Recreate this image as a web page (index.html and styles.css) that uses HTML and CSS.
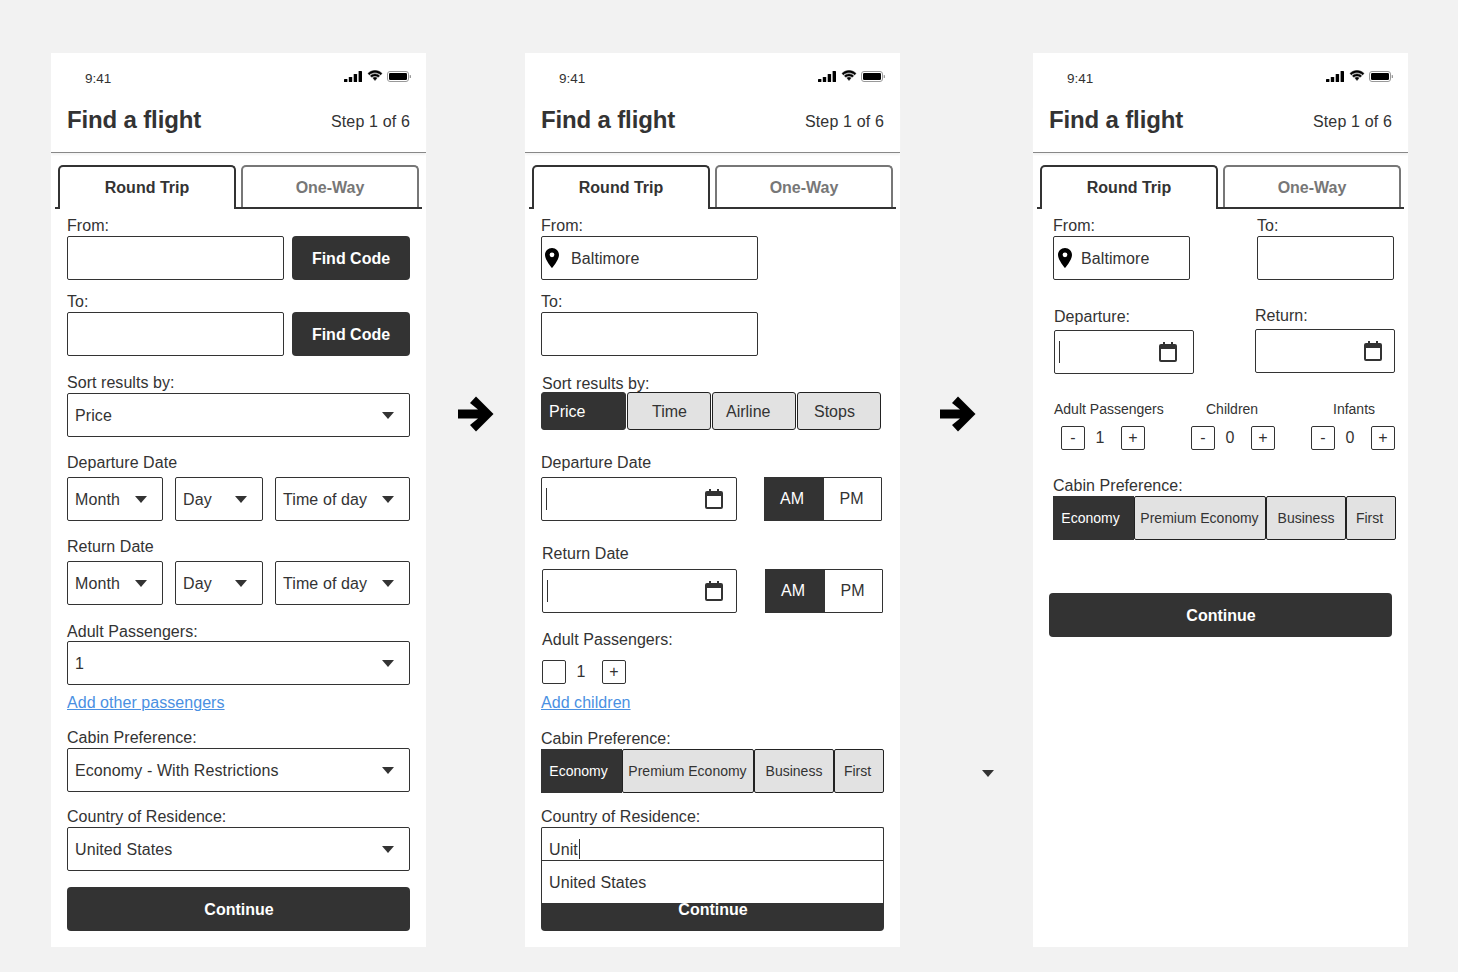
FILE: index.html
```html
<!DOCTYPE html>
<html lang="en">

<head>
    <meta charset="UTF-8">
    <meta name="viewport" content="width=device-width, initial-scale=1.0">
    <title>Find a flight</title>
    <link rel="stylesheet" href="styles.css">
</head>

<body>
    <svg class="sprites" width="0" height="0">
        <symbol id="signal" viewBox="0 0 18 11">
            <rect x="0" y="8" width="3.400" height="3" rx=".6" />
            <rect x="4.800" y="6" width="3.400" height="5" rx=".6" />
            <rect x="9.700" y="3" width="3.400" height="8" rx=".6" />
            <rect x="14.600" y="0" width="3.400" height="11" rx=".6" />
        </symbol>
        <symbol id="wifi" viewBox="0 0 16 11">
            <g stroke="#000" stroke-width=".5">
                <path d="M8 2.600c2.200 0 4.200.9 5.600 2.300l1.400-1.500C13.200 1.600 10.700.5 8 .5S2.800 1.600 1 3.400l1.400 1.500C3.800 3.500 5.800 2.600 8 2.600z" />
                <path d="M8 6c1.300 0 2.400.5 3.200 1.300l1.400-1.500C11.400 4.600 9.800 3.900 8 3.900s-3.400.7-4.600 1.900l1.400 1.500C5.600 6.500 6.700 6 8 6z" />
                <path d="M8 7.300c-.8 0-1.500.3-2 .8l2 2.400 2-2.400c-.5-.5-1.200-.8-2-.8z" />
            </g>
        </symbol>
        <symbol id="battery" viewBox="0 0 24 11">
            <rect x=".5" y=".5" width="21" height="10" rx="2.500" fill="none" stroke="#999" />
            <rect x="2" y="2" width="18" height="7" rx="1.200" />
            <rect x="22.700" y="4" width="1.300" height="3" rx=".6" fill="#999" />
        </symbol>
        <symbol id="pin" viewBox="0 0 14 20">
            <path fill-rule="evenodd" d="M7 0C3.100 0 0 3.100 0 7c0 5 7 13 7 13s7-8 7-13c0-3.900-3.100-7-7-7zm0 9.200A2.400 2.400 0 1 1 7 4.400a2.400 2.400 0 0 1 0 4.800z" />
        </symbol>
        <symbol id="calendar" viewBox="0 0 18 20">
            <path fill-rule="evenodd" d="M4 0h2v2h6V0h2v2h2a2 2 0 0 1 2 2v14a2 2 0 0 1-2 2H2a2 2 0 0 1-2-2V4a2 2 0 0 1 2-2h2V0zM2 7v11h14V7H2z" />
        </symbol>
        <symbol id="arrow" viewBox="0 0 36 36">
            <path d="M0 13.500H20L12 7 18 .5 35.500 18 18 35.500 12 29 20 22.500H0Z" />
        </symbol>
    </svg>

    <div class="board">

        <!-- first screen -->
        <section class="phone">
            <div class="status">
                <span class="time">9:41</span>
                <span class="status-icons">
                    <svg class="i-signal"><use href="#signal" /></svg>
                    <svg class="i-wifi"><use href="#wifi" /></svg>
                    <svg class="i-battery"><use href="#battery" /></svg>
                </span>
            </div>
            <div class="header">
                <h1>Find a flight</h1>
                <span class="step">Step 1 of 6</span>
            </div>
            <div class="tabs">
                <div class="tab active">Round Trip</div>
                <div class="tab">One-Way</div>
            </div>
            <div class="form">
                <label class="lb lh-18 mt-8">From:</label>
                <div class="row">
                    <div class="box w-217"></div>
                    <button class="find">Find Code</button>
                </div>
                <label class="lb lh-18 mt-13">To:</label>
                <div class="row">
                    <div class="box w-217"></div>
                    <button class="find">Find Code</button>
                </div>
                <label class="lb lh-18 mt-18">Sort results by:</label>
                <div class="box select">Price<i class="caret"></i></div>
                <label class="lb mt-16 lb-gap">Departure Date</label>
                <div class="row-date">
                    <div class="box select w-96">Month<i class="caret"></i></div>
                    <div class="box select w-88">Day<i class="caret"></i></div>
                    <div class="box select w-135">Time of day<i class="caret"></i></div>
                </div>
                <label class="lb mt-16 lb-gap">Return Date</label>
                <div class="row-date">
                    <div class="box select w-96">Month<i class="caret"></i></div>
                    <div class="box select w-88">Day<i class="caret"></i></div>
                    <div class="box select w-135">Time of day<i class="caret"></i></div>
                </div>
                <label class="lb mt-17">Adult Passengers:</label>
                <div class="box select">1<i class="caret"></i></div>
                <a class="lb link mt-8" href="#">Add other passengers</a>
                <label class="lb mt-17 lb-2">Cabin Preference:</label>
                <div class="box select">Economy - With Restrictions<i class="caret"></i></div>
                <label class="lb mt-15 lb-2">Country of Residence:</label>
                <div class="box select">United States<i class="caret"></i></div>
                <button class="continue mt-16">Continue</button>
            </div>
        </section>

        <div class="gap gap-a">
            <svg class="big-arrow"><use href="#arrow" /></svg>
        </div>

        <!-- second screen -->
        <section class="phone">
            <div class="status">
                <span class="time">9:41</span>
                <span class="status-icons">
                    <svg class="i-signal"><use href="#signal" /></svg>
                    <svg class="i-wifi"><use href="#wifi" /></svg>
                    <svg class="i-battery"><use href="#battery" /></svg>
                </span>
            </div>
            <div class="header">
                <h1>Find a flight</h1>
                <span class="step">Step 1 of 6</span>
            </div>
            <div class="tabs">
                <div class="tab active">Round Trip</div>
                <div class="tab">One-Way</div>
            </div>
            <div class="form">
                <label class="lb lh-18 mt-8">From:</label>
                <div class="box w-217 place">
                    <svg class="i-pin"><use href="#pin" /></svg>
                    Baltimore
                </div>
                <label class="lb lh-18 mt-13">To:</label>
                <div class="box w-217"></div>
                <label class="lb lh-18 mt-19 in-1 lb-up">Sort results by:</label>
                <div class="seg sort">
                    <div class="on">Price</div>
                    <div>Time</div>
                    <div>Airline</div>
                    <div>Stops</div>
                </div>
                <label class="lb mt-23 lb-gap">Departure Date</label>
                <div class="row-ampm">
                    <div class="box date w-196">
                        <i class="cursor"></i>
                        <svg class="i-cal"><use href="#calendar" /></svg>
                    </div>
                    <div class="ampm"><span class="on">AM</span><span>PM</span></div>
                </div>
                <label class="lb mt-23 in-1 lb-7">Return Date</label>
                <div class="row-ampm in-1">
                    <div class="box date w-195">
                        <i class="cursor"></i>
                        <svg class="i-cal"><use href="#calendar" /></svg>
                    </div>
                    <div class="ampm"><span class="on">AM</span><span>PM</span></div>
                </div>
                <label class="lb mt-17 in-1">Adult Passengers:</label>
                <div class="stepper in-1 mt-12">
                    <span class="pm"></span><span class="num">1</span><span class="pm">+</span>
                </div>
                <a class="lb link mt-9" href="#">Add children</a>
                <label class="lb mt-18 lb-2">Cabin Preference:</label>
                <div class="seg cabin">
                    <div class="on">Economy</div>
                    <div>Premium Economy</div>
                    <div>Business</div>
                    <div>First</div>
                </div>
                <label class="lb mt-14 lb-2">Country of Residence:</label>
                <div class="combo-wrap">
                    <div class="box spacer"></div>
                    <button class="continue mt-16">Continue</button>
                    <div class="combo">
                        <div class="combo-input">Unit<i class="cursor-sm"></i></div>
                        <div class="combo-option">United States</div>
                    </div>
                </div>
            </div>
        </section>

        <div class="gap gap-b">
            <svg class="big-arrow"><use href="#arrow" /></svg>
            <i class="caret stray"></i>
        </div>

        <!-- third screen -->
        <section class="phone">
            <div class="status">
                <span class="time">9:41</span>
                <span class="status-icons">
                    <svg class="i-signal"><use href="#signal" /></svg>
                    <svg class="i-wifi"><use href="#wifi" /></svg>
                    <svg class="i-battery"><use href="#battery" /></svg>
                </span>
            </div>
            <div class="header">
                <h1>Find a flight</h1>
                <span class="step">Step 1 of 6</span>
            </div>
            <div class="tabs">
                <div class="tab active">Round Trip</div>
                <div class="tab">One-Way</div>
            </div>
            <div class="form form-wide">
                <div class="two mt-8">
                    <div>
                        <label class="lb lh-18">From:</label>
                        <div class="box w-137 place place-sm">
                            <svg class="i-pin"><use href="#pin" /></svg>
                            Baltimore
                        </div>
                    </div>
                    <div class="col-to">
                        <label class="lb lh-18">To:</label>
                        <div class="box w-137"></div>
                    </div>
                </div>
                <div class="two two-dates">
                    <div class="col-dep">
                        <label class="lb lb-5">Departure:</label>
                        <div class="box date w-140 cal-far">
                            <i class="cursor"></i>
                            <svg class="i-cal"><use href="#calendar" /></svg>
                        </div>
                    </div>
                    <div class="col-ret">
                        <label class="lb lb-5">Return:</label>
                        <div class="box date w-140 cal-near">
                            <svg class="i-cal"><use href="#calendar" /></svg>
                        </div>
                    </div>
                </div>
                <div class="pax-labels">
                    <span>Adult Passengers</span>
                    <span>Children</span>
                    <span>Infants</span>
                </div>
                <div class="pax-steppers">
                    <div class="stepper"><span class="pm">-</span><span class="num">1</span><span class="pm">+</span></div>
                    <div class="stepper"><span class="pm">-</span><span class="num">0</span><span class="pm">+</span></div>
                    <div class="stepper"><span class="pm">-</span><span class="num">0</span><span class="pm">+</span></div>
                </div>
                <label class="lb mt-26 lb-2">Cabin Preference:</label>
                <div class="seg cabin">
                    <div class="on">Economy</div>
                    <div>Premium Economy</div>
                    <div>Business</div>
                    <div>First</div>
                </div>
                <button class="continue continue-low">Continue</button>
            </div>
        </section>

    </div>
</body>

</html>
```

FILE: styles.css
```css
* {
    box-sizing: border-box;
}

body {
    margin: 0;
    background-color: #f2f2f2;
    color: #333;
    font-family: "Liberation Sans", Arial, sans-serif;
    font-size: 16px;
}

.sprites {
    display: block;
    height: 0;
}

.board {
    display: flex;
    align-items: flex-start;
    padding: 53px 0 25px 51px;
}

.phone {
    width: 375px;
    height: 894px;
    flex: none;
    background: white;
}

/* space between the screens */
.gap {
    flex: none;
    display: flex;
    flex-direction: column;
    align-items: flex-start;
    padding-top: 343px;
}

.gap-a {
    width: 99px;
    padding-left: 32px;
}

.gap-b {
    width: 133px;
    padding-left: 40px;
}

.big-arrow {
    width: 36px;
    height: 36px;
    fill: #000;
}

/* status bar */
.status {
    display: flex;
    justify-content: space-between;
    padding: 17px 15px 0 34px;
    height: 53px;
}

.time {
    font-size: 13.5px;
    line-height: 18px;
}

.status-icons {
    display: flex;
    align-items: flex-start;
}

.status-icons svg {
    fill: #000;
    display: block;
}

.i-signal {
    width: 18px;
    height: 11px;
    margin-top: 1px;
}

.i-wifi {
    width: 16px;
    height: 11px;
    margin-left: 5px;
}

.i-battery {
    width: 24px;
    height: 11px;
    margin-left: 4px;
    margin-top: 1px;
}

.header {
    display: flex;
    justify-content: space-between;
    align-items: center;
    height: 47px;
    padding: 0 16px 17px;
    border-bottom: 1px solid #888;
    box-shadow: 0 2px 2px #f4f4f4;
}

h1 {
    margin: -2px 0 0;
    font-size: 24px;
    letter-spacing: -.15px;
    line-height: 28px;
}

.step {
    padding-top: 2px;
    letter-spacing: .15px;
}

/* tabs */
.tabs {
    display: flex;
    gap: 5px;
    width: 367px;
    height: 44px;
    margin: 12px 0 0 4px;
    padding-left: 3px;
    border-bottom: 2px solid #333;
}

.tab {
    width: 178px;
    height: 42px;
    display: flex;
    align-items: center;
    justify-content: center;
    padding-top: 2px;
    border: 2px solid #777;
    border-bottom: none;
    border-radius: 5px 5px 0 0;
    color: #777;
    font-weight: bold;
}

.tab.active {
    height: 44px;
    margin-bottom: -2px;
    padding-top: 0;
    border-color: #333;
    color: #333;
    background: white;
}

/* form */
.form {
    padding: 0 16px;
}

.form-wide {
    padding-left: 16px;
}

.lb {
    display: block;
    height: 18px;
    line-height: 20px;
    letter-spacing: .05px;
    margin-bottom: 1px;
}

.lh-18 {
    line-height: 18px;
}

.lb-gap {
    margin-bottom: 6px;
}

.lb-2 {
    margin-bottom: 2px;
}

.lb-5 {
    margin-bottom: 5px;
}

.lb-7 {
    margin-bottom: 7px;
}

.lb-up {
    margin-bottom: -1px;
}

.in-1 {
    margin-left: 1px;
}

.mt-8 { margin-top: 8px; }
.mt-9 { margin-top: 9px; }
.mt-12 { margin-top: 12px; }
.mt-13 { margin-top: 13px; }
.mt-14 { margin-top: 14px; }
.mt-15 { margin-top: 15px; }
.mt-16 { margin-top: 16px; }
.mt-17 { margin-top: 17px; }
.mt-18 { margin-top: 18px; }
.mt-19 { margin-top: 19px; }
.mt-23 { margin-top: 23px; }
.mt-26 { margin-top: 26px; }

.w-88 { width: 88px; }
.w-96 { width: 96px; }
.w-135 { width: 135px; }
.w-137 { width: 137px; }
.w-140 { width: 140px; }
.w-195 { width: 195px; }
.w-196 { width: 196px; }
.w-217 { width: 217px; }

.box {
    height: 44px;
    border: 1px solid #333;
    border-radius: 2px;
    background: white;
}

.row {
    display: flex;
    justify-content: space-between;
}

.row-date {
    display: flex;
    justify-content: space-between;
}

.find {
    width: 118px;
    height: 44px;
    padding: 2px 0 0;
    border: none;
    border-radius: 4px;
    background: #333;
    color: white;
    font: bold 16px "Liberation Sans", Arial, sans-serif;
}

.select {
    display: flex;
    align-items: center;
    justify-content: space-between;
    padding: 2px 15px 0 7px;
    letter-spacing: .1px;
}

.caret {
    width: 0;
    height: 0;
    flex: none;
    display: block;
    border-left: 6px solid transparent;
    border-right: 6px solid transparent;
    border-top: 7px solid #333;
}

.select .caret {
    margin-top: -2px;
}

.stray {
    margin: 338px 0 0 42px;
}

.link {
    color: #4a90e2;
    text-decoration: underline;
}

.continue {
    display: block;
    width: 343px;
    height: 44px;
    padding: 2px 0 0 1px;
    border: none;
    border-radius: 4px;
    background: #333;
    color: white;
    font: bold 16px "Liberation Sans", Arial, sans-serif;
}

.place {
    display: flex;
    align-items: center;
    padding: 2px 0 0 3px;
    gap: 12px;
    letter-spacing: .1px;
}

.place-sm {
    padding-left: 4px;
    gap: 9px;
}

.i-pin {
    width: 14px;
    height: 20px;
    fill: #000;
    margin-top: -3px;
}

.date {
    display: flex;
    align-items: center;
    justify-content: space-between;
    padding: 0 13px 0 4px;
}

.cal-far {
    padding-right: 16px;
}

.cal-near {
    padding-right: 12px;
}

.cursor {
    display: block;
    width: 1px;
    height: 22px;
    background: #333;
}

.i-cal {
    width: 18px;
    height: 20px;
    fill: #333;
    margin-left: auto;
}

/* segmented controls */
.seg {
    display: flex;
}

.seg > div {
    display: flex;
    align-items: center;
    background: #e2e2e2;
    border: 1px solid #222;
    border-radius: 3px;
}

.seg > div.on {
    background: #333;
    color: white;
    border-color: #333;
}

.sort {
    gap: 1px;
    height: 38px;
}

.sort > div {
    width: 84px;
    padding-top: 2px;
}

.sort > div:nth-child(1) { padding-left: 7px; width: 85px; }
.sort > div:nth-child(2) { padding-left: 24px; }
.sort > div:nth-child(3) { padding-left: 13px; }
.sort > div:nth-child(4) { padding-left: 16px; }

.cabin {
    width: 343px;
    height: 44px;
    font-size: 14px;
}

.cabin > div {
    justify-content: center;
    border-radius: 2px;
}

.cabin > div:nth-child(1) { width: 81px; border-radius: 0; padding-right: 6px; }
.cabin > div:nth-child(2) { width: 132px; padding-right: 1px; }
.cabin > div:nth-child(3) { width: 80px; }
.cabin > div:nth-child(4) { width: 50px; padding-right: 3px; }

.row-ampm {
    display: flex;
    justify-content: space-between;
    width: 341px;
}

.ampm {
    display: flex;
    width: 118px;
    height: 44px;
    border: 1px solid #333;
    border-radius: 1px;
}

.ampm span {
    width: 57px;
    flex: none;
    display: flex;
    align-items: center;
    justify-content: center;
    padding-right: 2px;
}

.ampm .on {
    background: #333;
    color: white;
    margin: -1px 0 -1px -1px;
    width: 60px;
    padding-right: 4px;
}

/* plus and minus */
.stepper {
    display: flex;
    align-items: center;
    height: 24px;
}

.pm {
    width: 24px;
    height: 24px;
    display: flex;
    align-items: center;
    justify-content: center;
    border: 1px solid #333;
    border-radius: 2px;
    font-size: 16px;
}

.num {
    width: 30px;
    text-align: center;
    margin-right: 6px;
}

/* country box with its open list, over the continue button */
.combo-wrap {
    position: relative;
}

.combo {
    position: absolute;
    top: 0;
    left: 0;
    width: 343px;
    height: 76px;
    border: 1px solid #333;
    border-bottom: none;
    border-radius: 2px 2px 0 0;
    background: white;
}

.combo-input {
    height: 33px;
    padding: 11px 0 0 7px;
    line-height: 18px;
    letter-spacing: .1px;
    border-bottom: 1px solid #333;
}

.cursor-sm {
    display: inline-block;
    width: 1px;
    height: 20px;
    margin-left: 1px;
    vertical-align: -4px;
    background: #333;
}

.combo-option {
    padding: 13px 0 0 7px;
    line-height: 18px;
    letter-spacing: .1px;
}

/* third screen */
.two {
    display: flex;
    padding-left: 4px;
}

.col-to {
    margin-left: 67px;
}

.two-dates {
    margin-top: 27px;
    align-items: flex-start;
    padding-left: 5px;
}

.col-ret {
    margin: -1px 0 0 61px;
}

.pax-labels {
    display: grid;
    grid-template-columns: 152px 127px auto;
    margin-top: 26px;
    padding-left: 5px;
    font-size: 14px;
    line-height: 18px;
}

.pax-steppers {
    display: grid;
    grid-template-columns: 130px 120px auto;
    margin-top: 8px;
    padding-left: 12px;
}

.phone:last-child .cabin {
    margin-left: 4px;
}

.phone:last-child .lb-2 {
    margin-left: 4px;
}

.continue-low {
    margin-top: 53px;
}
```
